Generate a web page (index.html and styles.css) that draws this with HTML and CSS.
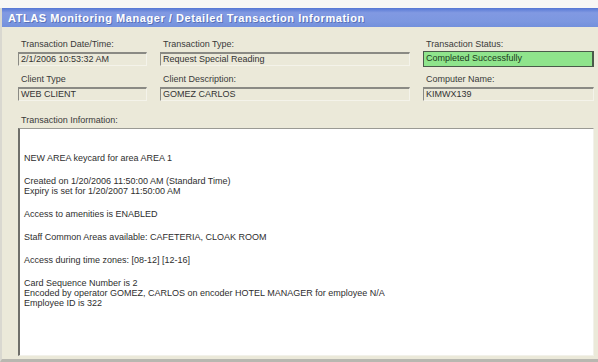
FILE: index.html
```html
<!DOCTYPE html>
<html lang="en">
<head>
    <meta charset="UTF-8">
    <meta name="viewport" content="width=device-width, initial-scale=1.0">
    <title>ATLAS Monitoring Manager</title>
    <link rel="stylesheet" href="styles.css">
</head>
<body>
    <div class="window">
        <div class="title-bar">
            <span class="title-text">ATLAS Monitoring Manager / Detailed Transaction Information</span>
        </div>

        <main class="panel">
            <!-- Summary fields -->
            <div class="field-grid">
                <div class="field">
                    <span class="field-label">Transaction Date/Time:</span>
                    <div class="field-box">2/1/2006 10:53:32 AM</div>
                </div>
                <div class="field">
                    <span class="field-label">Transaction Type:</span>
                    <div class="field-box">Request Special Reading</div>
                </div>
                <div class="field">
                    <span class="field-label">Transaction Status:</span>
                    <div class="field-box status-ok">Completed Successfully</div>
                </div>
                <div class="field">
                    <span class="field-label">Client Type</span>
                    <div class="field-box">WEB CLIENT</div>
                </div>
                <div class="field">
                    <span class="field-label">Client Description:</span>
                    <div class="field-box">GOMEZ CARLOS</div>
                </div>
                <div class="field">
                    <span class="field-label">Computer Name:</span>
                    <div class="field-box">KIMWX139</div>
                </div>
            </div>

            <!-- Transaction details -->
            <span class="field-label info-label">Transaction Information:</span>
            <div class="info-box">
                <p>NEW AREA keycard for area AREA 1</p>
                <p>Created on 1/20/2006 11:50:00 AM (Standard Time)<br>Expiry is set for 1/20/2007 11:50:00 AM</p>
                <p>Access to amenities is ENABLED</p>
                <p>Staff Common Areas available: CAFETERIA, CLOAK ROOM</p>
                <p>Access during time zones: [08-12] [12-16]</p>
                <p>Card Sequence Number is 2<br>Encoded by operator GOMEZ, CARLOS on encoder HOTEL MANAGER for employee N/A<br>Employee ID is 322</p>
            </div>
        </main>
    </div>
</body>
</html>
```

FILE: styles.css
```css
:root {
    --xp-beige: #ebe9d9;
    --field-dark: #8a8a84;
    --text-dark: #2e2e2e;
    --title-blue: #7c97e0;
    --status-green: #8fe48c;
}

* {
    margin: 0;
    padding: 0;
    box-sizing: border-box;
}

body {
    font-family: 'Liberation Sans', Arial, sans-serif;
    background-color: #f7f7f5;
    color: var(--text-dark);
    padding-top: 8px;
}

.window {
    display: flex;
    flex-direction: column;
    height: 354px;
    border-left: 2px solid #d9d8d0;
    border-bottom: 3px solid #b8b7b0;
}

.title-bar {
    height: 19px;
    display: flex;
    align-items: center;
    padding-left: 6px;
    background: linear-gradient(#5577d4 0%, #8199e2 25%, var(--title-blue) 70%, #7390dc 100%);
}

.title-text {
    color: #fff;
    font-size: 11px;
    font-weight: 700;
    letter-spacing: 0.55px;
    text-shadow: 1px 1px 0 #5a72b8;
}

.panel {
    flex: 1;
    display: flex;
    flex-direction: column;
    background-color: var(--xp-beige);
    padding: 11px 4px 3px 16px;
}

.field-grid {
    display: grid;
    grid-template-columns: 129px 250px 1fr;
    column-gap: 13px;
    row-gap: 6px;
}

.field {
    display: flex;
    flex-direction: column;
}

.field-label {
    font-size: 9px;
    line-height: 12px;
    color: #3a3a3a;
    padding-left: 3px;
    margin-bottom: 2px;
}

.field-box {
    height: 14px;
    font-size: 9px;
    line-height: 11px;
    padding-left: 2px;
    color: #333;
    border-top: 2px solid var(--field-dark);
    border-left: 1px solid var(--field-dark);
    border-right: 1px solid #f4f3ea;
    border-bottom: 1px solid #f4f3ea;
}

.status-ok {
    height: 16px;
    margin-top: -1px;
    line-height: 12px;
    background-color: var(--status-green);
    color: #1c3a1c;
    border: 1px solid #4a5a4a;
    border-right-width: 2px;
}

.info-label {
    margin-top: 13px;
    margin-bottom: 2px;
}

.info-box {
    flex: 1;
    background-color: #fff;
    padding: 24px 4px 0 4px;
    border-top: 1px solid #9a9a94;
    border-left: 2px solid #6f6f6a;
    border-right: 1px solid #f2f1ea;
    border-bottom: 1px solid #f2f1ea;
    font-size: 9px;
    line-height: 10px;
}

.info-box p {
    margin-bottom: 13px;
}
```
